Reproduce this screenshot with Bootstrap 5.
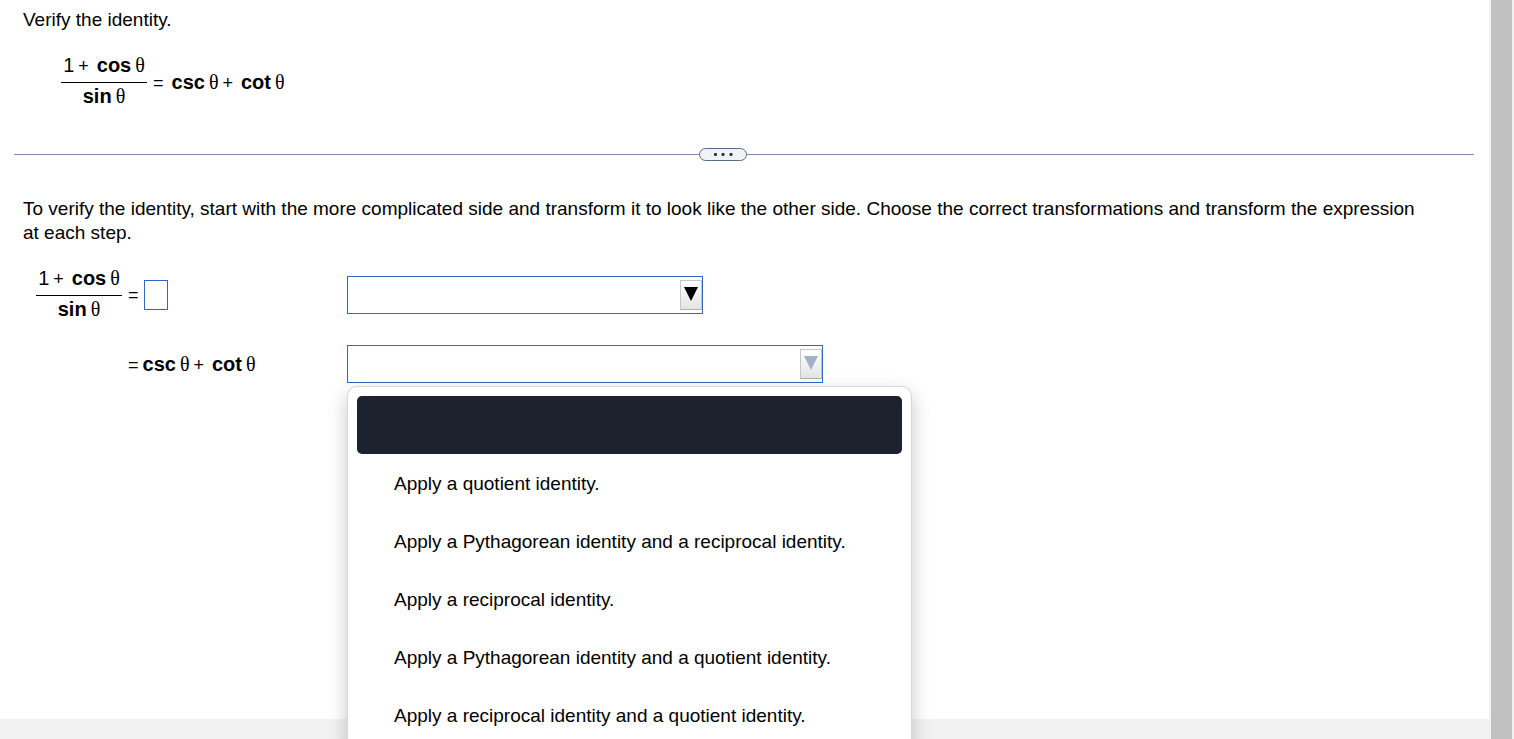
<!DOCTYPE html>
<html lang="en">
<head>
<meta charset="utf-8">
<meta name="viewport" content="width=device-width, initial-scale=1">
<title>Verify the identity</title>
<link href="https://cdn.jsdelivr.net/npm/bootstrap@5.3.0/dist/css/bootstrap.min.css" rel="stylesheet">
<style>
  body { font: 19px/24px "Liberation Sans", Arial, sans-serif; color: #000; background: #f2f2f2; }
  .page { padding: 8px 15px 0 14px; }
  .page-foot { height: 20px; }
  .scroll-track { width: 25px; background: #f1f1f1; padding: 0 2px; }
  .scroll-thumb { background: #c1c1c1; }
  .inset { padding: 0 48px 0 9px; }
  .given, .steps { font-size: 20px; }
  .theta { font-family: "Liberation Serif", "Times New Roman", serif; margin-left: 4px; }
  .op { font-size: 18px; }
  .fraction { width: 86px; text-align: center; }
  .numerator { border-bottom: 1px solid #000; padding: 0 0 4px; }
  .denominator { padding: 1px 0 3px; }
  .given { padding: 21px 0 0 47px; gap: 6px; }
  .divider { margin-top: 37px; }
  .divider-line { height: 1px; background: #8089a6; flex: 1 1 0; }
  .divider-line:last-child { flex-basis: 42px; }
  .more-btn { width: 48px; height: 13px; border: 1px solid #5a6b86; border-radius: 7px; background: #f0f2f5; }
  .instructions { margin: 36px 0 0; }
  .steps { display: grid; grid-template-columns: 92px 219px 1fr; row-gap: 21px; padding: 21px 0 0 22px; align-items: center; }
  .step-eq { gap: 5px; }
  .answer { width: 24px; height: 30px; border: 1px solid #2f67c5; padding: 0 2px; background: #fff; }
  .picker { height: 38px; }
  .picker-narrow { width: 356px; }
  .picker-wide { width: 476px; }
  .picker select { appearance: none; border: 1px solid #2f67c5; background: #fff; border-radius: 0; padding: 0 30px 0 8px; color: #000; }
  .picker-arrow { top: 4px; right: 1px; width: 22px; height: 30px; padding-top: 6px; border: 1px solid #c6c6c6; border-bottom-color: #b0b0b0; background: linear-gradient(#fff, #e4e4e4); pointer-events: none; color: #000; }
  .picker-arrow.muted { color: #a6b0c6; }
  .choices { display: block; top: 41px; left: 0; width: 565px; padding: 9px; border: 1px solid #d8d8d8; border-radius: 10px; box-shadow: 0 8px 20px rgba(0,0,0,.22); font-size: 19px; }
  .choices .dropdown-item { height: 58px; padding: 2px 37px 0; color: #000; border-radius: 5px; }
  .choices .dropdown-item.active { background: #1d232e; }
</style>
</head>
<body class="vh-100 overflow-hidden d-flex">
<div class="flex-fill d-flex flex-column">
  <main class="page bg-white flex-fill">
    <p class="inset m-0">Verify the identity.</p>
    <div class="given d-flex align-items-center">
      <div class="fraction">
        <div class="numerator">1<span class="op ms-1">+</span><b class="ms-2">cos</b><span class="theta">θ</span></div>
        <div class="denominator"><b>sin</b><span class="theta">θ</span></div>
      </div>
      <div><span class="op">=</span><b class="ms-2">csc</b><span class="theta">θ</span><span class="op ms-1">+</span><b class="ms-2">cot</b><span class="theta">θ</span></div>
    </div>

    <div class="divider d-flex align-items-center">
      <div class="divider-line"></div>
      <button type="button" class="more-btn p-0 d-flex align-items-center justify-content-center" aria-label="Show more">
        <svg width="19" height="3" viewBox="0 0 19 3" fill="#333"><circle cx="1.5" cy="1.5" r="1.6"/><circle cx="9" cy="1.5" r="1.6"/><circle cx="17" cy="1.5" r="1.6"/></svg>
      </button>
      <div class="divider-line"></div>
    </div>

    <p class="instructions inset">To verify the identity, start with the more complicated side and transform it to look like the other side. Choose the correct transformations and transform the expression at each step.</p>

    <form class="steps">
      <div class="fraction">
        <div class="numerator">1<span class="op ms-1">+</span><b class="ms-2">cos</b><span class="theta">θ</span></div>
        <div class="denominator"><b>sin</b><span class="theta">θ</span></div>
      </div>
      <div class="step-eq d-flex align-items-center"><span class="op">=</span><input class="answer" type="text" aria-label="Expression after the first step"></div>
      <div class="picker picker-narrow position-relative">
        <select class="w-100 h-100" aria-label="First transformation"><option></option></select>
        <span class="picker-arrow position-absolute d-flex justify-content-center"><svg width="14" height="14" viewBox="0 0 14 14" fill="currentColor"><path d="M0 0H14L7 14Z"/></svg></span>
      </div>

      <div></div>
      <div><span class="op">=</span><b class="ms-1">csc</b><span class="theta">θ</span><span class="op ms-1">+</span><b class="ms-2">cot</b><span class="theta">θ</span></div>
      <div class="picker picker-wide position-relative">
        <select class="w-100 h-100" aria-label="Second transformation"><option></option></select>
        <span class="picker-arrow muted position-absolute d-flex justify-content-center"><svg width="14" height="14" viewBox="0 0 14 14" fill="currentColor"><path d="M0 0H14L7 14Z"/></svg></span>
        <div class="choices dropdown-menu m-0">
          <button type="button" class="dropdown-item active" aria-label="No choice"></button>
          <button type="button" class="dropdown-item">Apply a quotient identity.</button>
          <button type="button" class="dropdown-item">Apply a Pythagorean identity and a reciprocal identity.</button>
          <button type="button" class="dropdown-item">Apply a reciprocal identity.</button>
          <button type="button" class="dropdown-item">Apply a Pythagorean identity and a quotient identity.</button>
          <button type="button" class="dropdown-item">Apply a reciprocal identity and a quotient identity.</button>
        </div>
      </div>
    </form>
  </main>
  <footer class="page-foot"></footer>
</div>
<div class="scroll-track flex-shrink-0 d-flex"><div class="scroll-thumb flex-fill"></div></div>
<script src="https://cdn.jsdelivr.net/npm/bootstrap@5.3.0/dist/js/bootstrap.bundle.min.js"></script>
</body>
</html>
